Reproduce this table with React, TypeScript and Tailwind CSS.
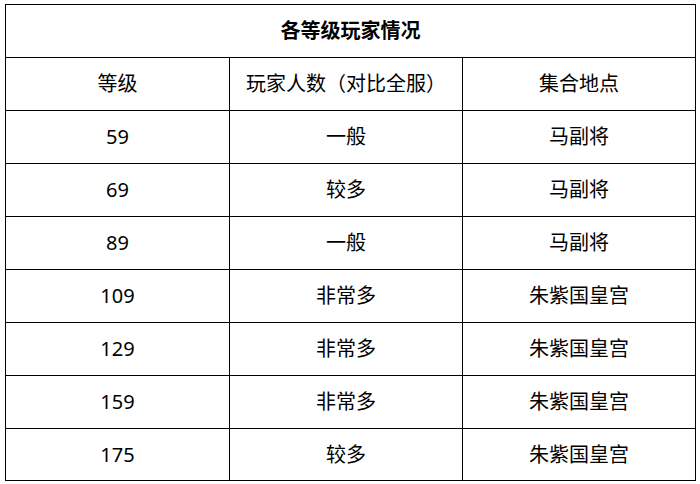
import React from "react";

const rows = [
  ["59", "一般", "马副将"],
  ["69", "较多", "马副将"],
  ["89", "一般", "马副将"],
  ["109", "非常多", "朱紫国皇宫"],
  ["129", "非常多", "朱紫国皇宫"],
  ["159", "非常多", "朱紫国皇宫"],
  ["175", "较多", "朱紫国皇宫"],
];

const cell =
  "flex items-center justify-center border-r border-b border-black";

const App = () => {
  return (
    <div
      className="bg-white w-[700px] h-[484px] pl-[5px] pt-[4px] text-black text-[20px]"
      style={{ fontFamily: '"Noto Sans", "Noto Sans CJK SC", sans-serif' }}
    >
      <div className="w-[691px] border-l border-t border-black grid grid-cols-[224px_233px_233px]">
        {/* title */}
        <div className={`${cell} col-span-3 h-[53px] font-bold`}>
          各等级玩家情况
        </div>

        {/* header */}
        <div className={`${cell} h-[53px]`}>等级</div>
        <div className={`${cell} h-[53px]`}>玩家人数（对比全服）</div>
        <div className={`${cell} h-[53px]`}>集合地点</div>

        {rows.map((r, i) => {
          const h = i === rows.length - 1 ? "h-[52px]" : "h-[53px]";
          return (
            <React.Fragment key={r[0]}>
              <div className={`${cell} ${h}`}>{r[0]}</div>
              <div className={`${cell} ${h}`}>{r[1]}</div>
              <div className={`${cell} ${h}`}>{r[2]}</div>
            </React.Fragment>
          );
        })}
      </div>
    </div>
  );
};

export default App;
